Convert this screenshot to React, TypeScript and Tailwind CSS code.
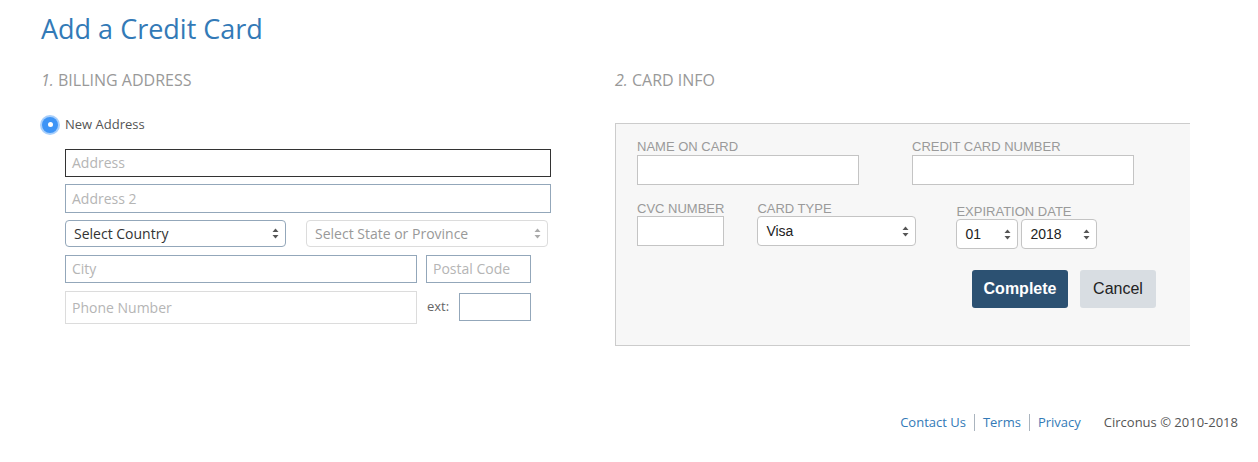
import React from "react";

const sans = "font-['Open_Sans',_'Liberation_Sans',_sans-serif]";
const helv = "font-['Liberation_Sans',_Arial,_sans-serif]";

function Arrows({ light }: { light?: boolean }) {
  return (
    <svg width="7" height="11" viewBox="0 0 7 11" className="shrink-0">
      <path d="M3.5 0.5 L6.5 4 L0.5 4 Z" fill={light ? "#aaa" : "#555"} />
      <path d="M3.5 10.5 L6.5 7 L0.5 7 Z" fill={light ? "#aaa" : "#555"} />
    </svg>
  );
}

function Field({
  placeholder,
  className,
}: {
  placeholder?: string;
  className: string;
}) {
  return (
    <div
      className={`flex items-center border px-[6px] text-[14px] text-[#b5b5b5] ${className}`}
    >
      {placeholder}
    </div>
  );
}

function Select({
  label,
  className,
  light,
}: {
  label: string;
  className: string;
  light?: boolean;
}) {
  return (
    <div
      className={`flex items-center justify-between rounded-[4px] border bg-white pl-[8px] pr-[6px] ${className}`}
    >
      <span>{label}</span>
      <Arrows light={light} />
    </div>
  );
}

function Label({
  children,
  tight,
}: {
  children: React.ReactNode;
  tight?: boolean;
}) {
  return (
    <div
      className={`text-[13px] leading-[14px] text-[#9a9a9a] ${tight ? "mb-0" : "mb-px"}`}
    >
      {children}
    </div>
  );
}

export default function App() {
  return (
    <div className={`relative h-[462px] w-[1258px] overflow-hidden bg-white ${sans}`}>
      <div className="pl-[41px] pt-[11px]">
        <h1 className="text-[27px] leading-[36px] text-[#337ab7]">
          Add a Credit Card
        </h1>

        <div className="mt-[23px] flex">
          {/* Billing address */}
          <div className="w-[574px]">
            <h2 className="text-[16px] leading-[20px] text-[#999]">
              <span className="italic">1.</span> BILLING ADDRESS
            </h2>

            <div className="mt-[25px] flex items-center gap-[7px]">
              <div className="ml-[1px] flex h-[16px] w-[16px] items-center justify-center rounded-full bg-[#3d94f6] shadow-[0_0_0_2px_rgba(61,148,246,0.45)]">
                <div className="h-[5px] w-[5px] rounded-full bg-white" />
              </div>
              <span className="text-[13px] text-[#555]">New Address</span>
            </div>

            <div className="ml-[24px] mt-[14px] flex w-[486px] flex-col">
              <Field placeholder="Address" className="h-[28px] w-[486px] border-[#333]" />
              <Field
                placeholder="Address 2"
                className="mt-[7px] h-[29px] w-[486px] border-[#93a7ba]"
              />
              <div className="mt-[7px] flex gap-[20px]">
                <Select
                  label="Select Country"
                  className="h-[27px] w-[221px] border-[#93a7ba] text-[14px] text-[#333]"
                />
                <Select
                  label="Select State or Province"
                  light
                  className="h-[27px] w-[242px] border-[#dcdcdc] text-[14px] text-[#999]"
                />
              </div>
              <div className="mt-[8px] flex gap-[9px]">
                <Field placeholder="City" className="h-[28px] w-[352px] border-[#93a7ba]" />
                <Field
                  placeholder="Postal Code"
                  className="h-[28px] w-[105px] border-[#93a7ba]"
                />
              </div>
              <div className="mt-[8px] flex items-center">
                <Field
                  placeholder="Phone Number"
                  className="h-[33px] w-[352px] border-[#dcdcdc]"
                />
                <span className="ml-[10px] text-[13px] text-[#666]">ext:</span>
                <div className="ml-[10px] h-[28px] w-[72px] border border-[#93a7ba]" />
              </div>
            </div>
          </div>

          {/* Card info */}
          <div className="w-[575px]">
            <h2 className="text-[16px] leading-[20px] text-[#999]">
              <span className="italic">2.</span> CARD INFO
            </h2>

            <div
              className={`mt-[33px] h-[223px] border-y border-l border-[#cccccc] bg-[#f7f7f7] pl-[21px] pt-[16px] ${helv}`}
            >
              <div className="flex gap-[53px]">
                <div>
                  <Label>NAME ON CARD</Label>
                  <div className="h-[30px] w-[222px] border border-[#c4c4c4] bg-white" />
                </div>
                <div>
                  <Label>CREDIT CARD NUMBER</Label>
                  <div className="h-[30px] w-[222px] border border-[#c4c4c4] bg-white" />
                </div>
              </div>

              <div className="mt-[17px] flex">
                <div>
                  <Label tight>CVC NUMBER</Label>
                  <div className="h-[30px] w-[87px] border border-[#c4c4c4] bg-white" />
                </div>
                <div className="ml-[33px]">
                  <Label tight>CARD TYPE</Label>
                  <Select
                    label="Visa"
                    className="h-[30px] w-[159px] border-[#c4c4c4] text-[14px] text-[#222]"
                  />
                </div>
                <div className="ml-[40px] pt-[3px]">
                  <Label tight>EXPIRATION DATE</Label>
                  <div className="flex gap-[3px]">
                    <Select
                      label="01"
                      className="h-[30px] w-[62px] border-[#c4c4c4] text-[14px] text-[#222]"
                    />
                    <Select
                      label="2018"
                      className="h-[30px] w-[76px] border-[#c4c4c4] text-[14px] text-[#222]"
                    />
                  </div>
                </div>
              </div>

              <div className="mt-[21px] flex gap-[12px] pl-[335px]">
                <button className="h-[38px] w-[96px] rounded-[3px] bg-[#2c5172] text-[16px] font-bold text-white">
                  Complete
                </button>
                <button className="h-[38px] w-[76px] rounded-[3px] bg-[#d8dde2] text-[16px] text-[#222]">
                  Cancel
                </button>
              </div>
            </div>
          </div>
        </div>
      </div>

      {/* Footer */}
      <footer className="absolute right-[20px] top-[412px] flex items-center text-[13px] leading-[20px]">
        <a className="pr-[8px] text-[#337ab7]">Contact Us</a>
        <span className="h-[17px] w-px bg-[#aab4be]" />
        <a className="px-[8px] text-[#337ab7]">Terms</a>
        <span className="h-[17px] w-px bg-[#aab4be]" />
        <a className="pl-[8px] text-[#337ab7]">Privacy</a>
        <span className="ml-[23px] text-[#555]">Circonus © 2010-2018</span>
      </footer>
    </div>
  );
}
